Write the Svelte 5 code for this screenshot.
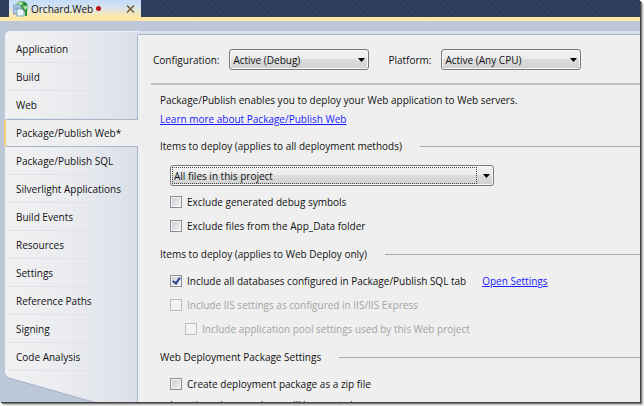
<script>
  const pages = [
    'Application', 'Build', 'Web', 'Package/Publish Web*', 'Package/Publish SQL',
    'Silverlight Applications', 'Build Events', 'Resources', 'Settings',
    'Reference Paths', 'Signing', 'Code Analysis'
  ];
  let current = $state('Package/Publish Web*');
  let configuration = $state('Active (Debug)');
  let platform = $state('Active (Any CPU)');
  let items = $state('All files in this project');
  let excludeSymbols = $state(false);
  let excludeData = $state(false);
  let includeDatabases = $state(true);
  let zip = $state(false);
</script>

{#snippet arrow()}
  <svg class="arrow" width="7" height="4" viewBox="0 0 7 4" aria-hidden="true"><path d="M0 0H7L3.5 4Z" fill="#000" /></svg>
{/snippet}

<div class="window">
  <div class="frame">
    <header class="tabs">
      <div class="tab">
        <svg width="15" height="16" viewBox="0 0 15 16" aria-hidden="true">
          <circle cx="9" cy="6" r="6" fill="#3c9a45" />
          <path d="M5 2Q8 0 11 1L9 4L5 5ZM10 5L14 4L15 7L12 9Z" fill="#a9dfa0" />
          <path d="M9 1Q13 2 14 5L11 4Z" fill="#1f7632" />
          <path d="M0.5 4H6L8 6V13H0.5Z" fill="#b4cde4" stroke="#7fa3c4" />
          <path d="M2 6H6V9H2Z" fill="#7fa8d2" />
          <path d="M4 8H9L11 10V15H4Z" fill="#eef6fb" stroke="#82a9c5" />
          <path d="M12 9L14 8V15H12Z" fill="#26913c" />
        </svg>
        <span>Orchard.Web</span>
        <i class="dot"></i>
        <button class="close" aria-label="Close tab">
          <svg width="9" height="8" viewBox="0 0 9 8"><path d="M1 0.5L8 7.5M8 0.5L1 7.5" stroke="#75633d" stroke-width="1.6" /></svg>
        </button>
      </div>
    </header>

    <div class="body">
      <nav class="side">
        {#each pages as page}
          <button class="item" class:active={page === current} onclick={() => (current = page)}>{page}</button>
        {/each}
        <svg class="foot" aria-hidden="true">
          <path d="M-1 3V300H400V120L4 7Q0 6 0 3Z" fill="#bcc7d8" />
          <path d="M0.5 3Q0.5 6 4 7L400 120" fill="none" stroke="#a3b1c7" />
        </svg>
      </nav>

      <main>
        <div class="config">
          <label for="configuration">Configuration:</label>
          <div class="combo">
            <select id="configuration" bind:value={configuration}>
              <option>Active (Debug)</option>
              <option>Active (Release)</option>
            </select>
            {@render arrow()}
          </div>
          <label class="platform" for="platform">Platform:</label>
          <div class="combo">
            <select id="platform" bind:value={platform}>
              <option>Active (Any CPU)</option>
            </select>
            {@render arrow()}
          </div>
        </div>

        <div class="content">
          <p>Package/Publish enables you to deploy your Web application to Web servers.</p>
          <p><a href="#learn">Learn more about Package/Publish Web</a></p>

          <h2>Items to deploy (applies to all deployment methods)</h2>
          <div class="group">
            <div class="combo wide">
              <select aria-label="Items to deploy" bind:value={items}>
                <option>All files in this project</option>
                <option>Only files needed to run this application</option>
              </select>
              <span class="focus"></span>
              {@render arrow()}
            </div>
            <label class="check"><input type="checkbox" bind:checked={excludeSymbols} />Exclude generated debug symbols</label>
            <label class="check"><input type="checkbox" bind:checked={excludeData} />Exclude files from the App_Data folder</label>
          </div>

          <h2>Items to deploy (applies to Web Deploy only)</h2>
          <div class="group">
            <div class="line">
              <label class="check"><input type="checkbox" bind:checked={includeDatabases} />Include all databases configured in Package/Publish SQL tab</label>
              <a href="#sql">Open Settings</a>
            </div>
            <label class="check"><input type="checkbox" disabled />Include IIS settings as configured in IIS/IIS Express</label>
            <label class="check nested"><input type="checkbox" disabled />Include application pool settings used by this Web project</label>
          </div>

          <h2>Web Deployment Package Settings</h2>
          <div class="group">
            <label class="check"><input type="checkbox" bind:checked={zip} />Create deployment package as a zip file</label>
            <p class="location">Location where package will be created:</p>
          </div>
        </div>
      </main>
    </div>
  </div>
</div>

<style>
  .window {
    box-sizing: border-box;
    height: 100vh;
    padding: 0 4px 4px 0;
    overflow: hidden;
    background: #fff;
    color: #111;
    font: 10px/16px "Open Sans", "Noto Sans", sans-serif;
  }
  .frame {
    display: flex;
    flex-direction: column;
    height: 100%;
    overflow: hidden;
    background: #bcc7d8;
    box-shadow: 1px 1px 0 #484848, 2px 2px 0 #777, 3px 3px 2px #aaa;
  }
  button, select { font: inherit; color: inherit; }
  .tabs {
    flex: none;
    display: flex;
    height: 17px;
    padding-left: 9px;
    border-bottom: 4px solid #ffe8a6;
    background: repeating-linear-gradient(45deg, #2b3b5a 0 2px, #30415f 2px 4px);
  }
  .tab {
    box-sizing: border-box;
    display: flex;
    align-items: center;
    width: 132px;
    padding: 0 6px 0 4px;
    background: linear-gradient(#c3dbfa, #d8e4ee 45%, #ffe8a6);
  }
  .tab span { margin-left: 3px; }
  .dot { width: 5px; height: 5px; margin-left: 3px; border-radius: 50%; background: #b51212; }
  .close { display: flex; margin-left: auto; padding: 0; border: 0; background: none; }
  .body { flex: 1; display: flex; min-height: 0; padding: 10px 0 0 5px; }
  .side {
    flex: none;
    box-sizing: border-box;
    display: flex;
    flex-direction: column;
    width: 133px;
    padding-top: 3px;
    border-top: 1px solid #f4f6f9;
    border-radius: 5px 0 0 0;
    background: linear-gradient(90deg, #f1f1f2, #ebecef 45%, #dadfe9);
  }
  .item {
    flex: none;
    box-sizing: border-box;
    height: 28px;
    padding: 0 0 0 11px;
    border: 0;
    border-right: 1px solid #a9b5c8;
    background: linear-gradient(90deg, #dfe2e9, #dfe2e9) 4px 100% / 112px 1px no-repeat;
    text-align: left;
    white-space: nowrap;
  }
  .item.active {
    border: 1px solid #a9b5c8;
    border-left: 2px solid #f5cf7d;
    border-right: 0;
    border-radius: 3px 0 0 3px;
    margin-left: -1px;
    padding-left: 10px;
    background: #efefef;
  }
  .foot { flex: 1; display: block; width: 100%; min-height: 0; border-right: 1px solid #a9b5c8; box-sizing: border-box; }
  main {
    flex: 1;
    min-width: 0;
    margin-top: 3px;
    padding-left: 13px;
    border-top: 1px solid #a9b5c8;
    background: #efefef;
    box-shadow: 0 -3px 0 #dadfe9;
    white-space: nowrap;
  }
  .config { display: flex; align-items: center; padding: 14px 0 13px 2px; border-bottom: 2px solid #bebebe; }
  .config .combo { width: 140px; margin-left: 10px; }
  .platform { margin-left: 19px; }
  .combo { position: relative; }
  select {
    appearance: none;
    display: block;
    box-sizing: border-box;
    width: 100%;
    height: 21px;
    margin: 0;
    padding: 0 20px 0 3px;
    border: 1px solid #787878;
    border-radius: 3px;
    outline: 0;
    background: linear-gradient(#f2f2f2, #ebebeb 50%, #dddddd 50%, #d0d0d0);
    box-shadow: inset 0 0 0 1px #f7f7f7;
  }
  .arrow { position: absolute; right: 4px; top: 9px; pointer-events: none; }
  .focus { position: absolute; inset: 2px 17px 2px 2px; border: 1px dotted #444; pointer-events: none; }
  .content { padding-left: 9px; }
  p { margin: 0; }
  .content > p:first-child { padding: 7px 0 3px; }
  a { color: #1a1aff; text-decoration: underline; }
  h2 {
    display: flex;
    align-items: center;
    gap: 18px;
    margin: 11px 0 0;
    font: inherit;
  }
  h2::after { content: ""; flex: 1; height: 1px; background: #a9a9a9; }
  .group { display: flex; flex-direction: column; align-items: flex-start; gap: 8px; padding: 11px 0 1px 10px; }
  .wide { width: 324px; }
  .check { display: flex; align-items: center; gap: 5px; }
  .line { display: flex; gap: 16px; }
  .nested { margin-left: 15px; }
  .location { line-height: 10px; }
  input {
    appearance: none;
    box-sizing: border-box;
    width: 12px;
    height: 12px;
    margin: 0;
    border: 1px solid #8b8f94;
    background: linear-gradient(135deg, #c6cbd1, #f6f6f6);
    box-shadow: inset 0 0 0 1px #f2f2f2;
  }
  input:checked::after {
    content: "";
    display: block;
    box-sizing: border-box;
    width: 5px;
    height: 8px;
    margin-left: 3px;
    border: solid #2d3f8f;
    border-width: 0 2px 2px 0;
    transform: rotate(35deg);
  }
  .check:has(input:disabled) { color: #a3a3a3; }
  input:disabled { border-color: #bdbdbd; background: #f3f3f3; }
</style>
